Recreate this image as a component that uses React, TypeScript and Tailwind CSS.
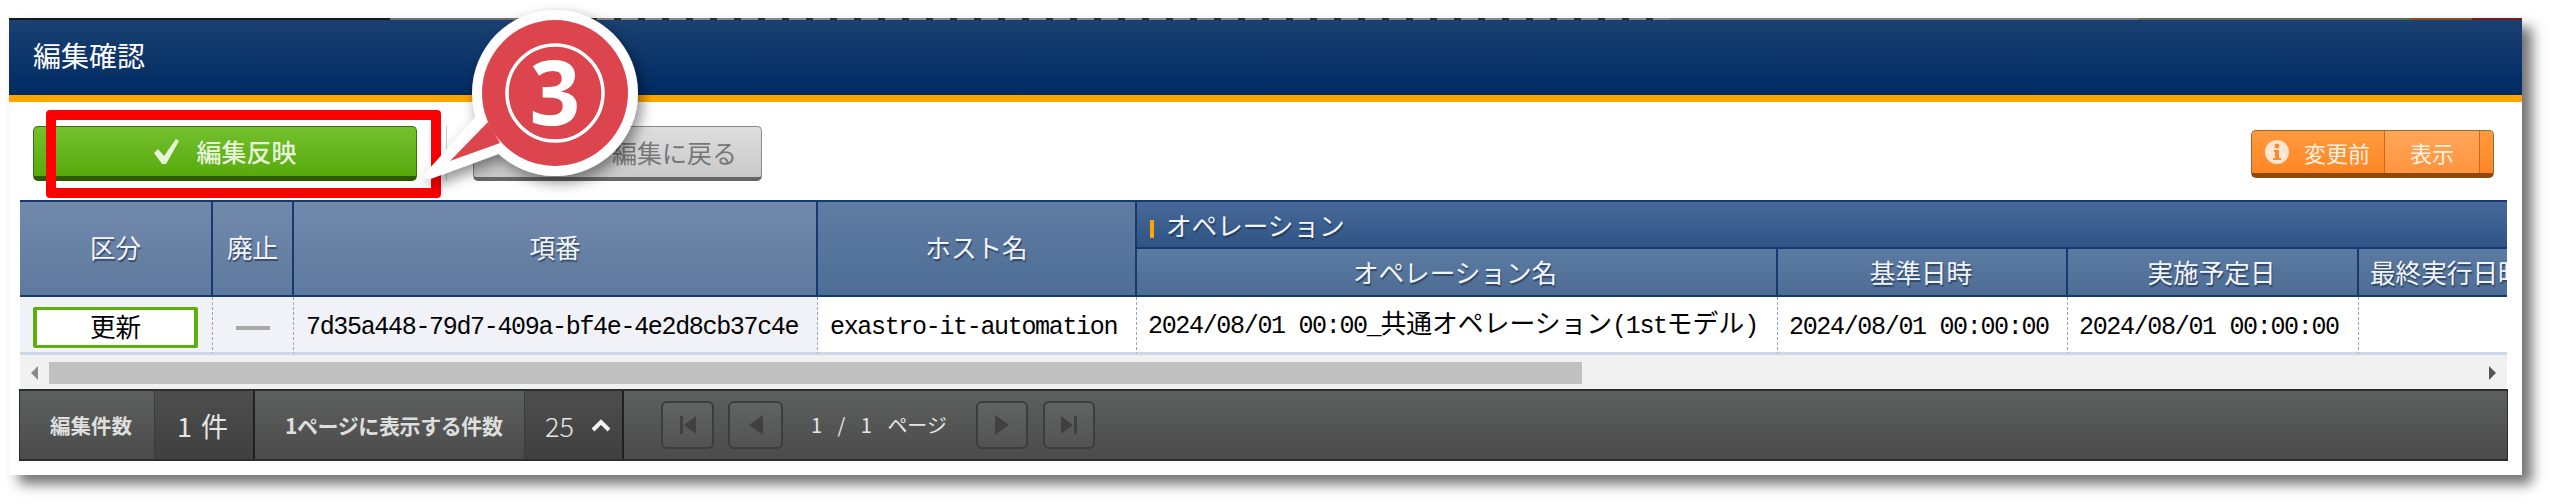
const sans = "font-['Noto_Sans_CJK_JP',sans-serif]";
const mono = "font-['Liberation_Mono','Noto_Sans_CJK_JP',monospace] text-[25px] tracking-[-1.33px] text-black";
const thShadow = '[text-shadow:1px_2px_1px_rgba(20,40,70,0.6)]';

const PagerIcon = ({ kind }: { kind: 'first' | 'prev' | 'next' | 'last' }) => (
    <svg width="24" height="24" viewBox="0 0 24 24" fill="#3f403f">
        {kind === 'first' && <path d="M4 3h3v18H4zM20 3v18L8 12z" />}
        {kind === 'prev' && <path d="M19 2v20L5 12z" />}
        {kind === 'next' && <path d="M5 2v20l14-10z" />}
        {kind === 'last' && <path d="M17 3h3v18h-3zM4 3v18l12-9z" />}
    </svg>
);

function PagerButton({ kind, width }: { kind: 'first' | 'prev' | 'next' | 'last'; width: string }) {
    return (
        <div className={`${width} h-[48px] flex items-center justify-center rounded-[6px] border-2 border-[#3c3d3c] bg-gradient-to-b from-[#626463] to-[#525352]`}>
            <PagerIcon kind={kind} />
        </div>
    );
}

function Callout() {
    return (
        <svg className="absolute inset-0 pointer-events-none" width="2551" height="504" viewBox="0 0 2551 504">
            <defs>
                <filter id="bubbleShadow" x="-20%" y="-20%" width="150%" height="150%">
                    <feDropShadow dx="4" dy="6" stdDeviation="7" floodColor="#000" floodOpacity="0.45" />
                </filter>
            </defs>
            <g filter="url(#bubbleShadow)">
                <circle cx="555" cy="93" r="83" fill="#fff" />
                <path d="M477 117L426 174Q424 178 430 178L498 153Z" fill="#fff" stroke="#fff" strokeWidth="2" strokeLinejoin="round" />
            </g>
            <circle cx="555" cy="93" r="73" fill="#dc444e" />
            <path d="M488 122L450 161L500 143Z" fill="#dc444e" />
            <circle cx="555" cy="93" r="48" fill="none" stroke="#fff" strokeWidth="3.5" />
            <text x="555" y="125" textAnchor="middle" fontFamily="'Noto Sans', sans-serif" fontWeight="700" fontSize="89" fill="#fff">3</text>
        </svg>
    );
}

export default function App() {
    return (
        <div className={`relative w-[2551px] h-[504px] overflow-hidden bg-white pl-[9px] pt-[18px] ${sans}`}>
            <div className="flex flex-col w-[2513px] h-[457px] bg-white shadow-[10px_9px_12px_rgba(0,0,0,0.55)]">
                {/* Sliver of the page that sits above the title bar */}
                <div className="flex h-[2px]">
                    <div className="w-[381px] bg-[#14181c]" />
                    <div className="w-[200px] bg-[#6e7072]" />
                    <div className="w-[1080px] bg-[repeating-linear-gradient(90deg,#2a2c2e_0px,#2a2c2e_7px,#86888a_7px,#86888a_24px)]" />
                    <div className="w-[468px] bg-[#77797a]" />
                    <div className="w-[272px] bg-[#5b6b55]" />
                    <div className="w-[62px] bg-[#8a4e1c]" />
                    <div className="w-[50px] bg-[#7a1c1c]" />
                </div>

                {/* Title bar */}
                <div className="flex items-center h-[82px] pl-[24px] pb-[6px] border-b-[7px] border-b-[#ffa500] bg-gradient-to-b from-[#1b4172] to-[#002a63]">
                    <span className="text-[28px] leading-none text-white">編集確認</span>
                </div>

                {/* Buttons */}
                <div className="flex items-center h-[98px] pl-[24px] pr-[28px] pt-[5px]">
                    <div className="flex items-center justify-center gap-[16px] w-[384px] h-[55px] rounded-[5px] border border-[#3d6b12] border-b-[5px] border-b-[#2c5a00] bg-gradient-to-b from-[#74c02e] to-[#57aa08]">
                        <svg width="27" height="27" viewBox="0 0 27 27" fill="#e6f4d8">
                            <path d="M1 15l4-4 6 7L23 1l3 2-13 23h-4z" />
                        </svg>
                        <span className="text-[25px] leading-none font-medium text-[#e6f4d8]">編集反映</span>
                    </div>
                    <div className="w-px h-[55px] ml-[29px] mr-[26px] bg-[#c8c8c8]" />
                    <div className="flex items-center justify-end pr-[24px] w-[289px] h-[55px] rounded-[5px] border border-[#8a8a8a] border-b-[4px] border-b-[#666] bg-gradient-to-b from-[#dedede] to-[#c9c9c9]">
                        <span className="text-[25px] leading-none text-[#777]">編集に戻る</span>
                    </div>
                    <div className="flex ml-auto w-[243px] h-[48px] rounded-[5px] border border-[#a0652a] border-b-[5px] border-b-[#8a4a10] overflow-hidden text-[22px] leading-none text-[#fff1e2] bg-gradient-to-b from-[#ff9a3e] to-[#ff8624]">
                        <div className="flex items-center w-[133px] pl-[13px] gap-[15px] border-r border-[#c46a22]">
                            <svg width="24" height="24" viewBox="0 0 24 24">
                                <circle cx="12" cy="12" r="12" fill="#ffe6d0" />
                                <circle cx="12" cy="6" r="2.4" fill="#ff8a2c" />
                                <path d="M9 10h5v8h2v2H8v-2h2v-6H9z" fill="#ff8a2c" />
                            </svg>
                            <span>変更前</span>
                        </div>
                        <div className="flex items-center justify-center w-[95px] bg-gradient-to-b from-[#ffa657] to-[#ff9440] border-r border-[#c46a22]">
                            <span>表示</span>
                        </div>
                    </div>
                </div>

                {/* Table */}
                <div className="ml-[11px] w-[2487px] h-[155px] overflow-hidden">
                    <table className="table-fixed w-[2523px] border-separate border-spacing-0">
                        <colgroup>
                            <col className="w-[193px]" />
                            <col className="w-[81px]" />
                            <col className="w-[524px]" />
                            <col className="w-[319px]" />
                            <col className="w-[641px]" />
                            <col className="w-[290px]" />
                            <col className="w-[291px]" />
                            <col className="w-[184px]" />
                        </colgroup>
                        <thead className={`text-[25.6px] leading-none font-normal text-[#f2f5f9] ${thShadow}`}>
                            <tr className="h-[49px]">
                                <th rowSpan={2} className="font-normal pb-[3px] border-t-2 border-b-2 border-r-2 border-[#143a70] bg-gradient-to-b from-[#7189ab] to-[#5f7a9f]">区分</th>
                                <th rowSpan={2} className="font-normal pb-[3px] border-t-2 border-b-2 border-r-2 border-[#143a70] bg-gradient-to-b from-[#7189ab] to-[#5f7a9f]">廃止</th>
                                <th rowSpan={2} className="font-normal pb-[3px] border-t-2 border-b-2 border-r-2 border-[#143a70] bg-gradient-to-b from-[#7189ab] to-[#5f7a9f]">項番</th>
                                <th rowSpan={2} className="font-normal pb-[3px] border-t-2 border-b-2 border-r-2 border-[#143a70] bg-gradient-to-b from-[#5f7ca2] to-[#4e6e97]">ホスト名</th>
                                <th colSpan={4} className="font-normal text-left pl-[13px] border-t-2 border-b-2 border-[#143a70] bg-gradient-to-b from-[#476a9a] to-[#2f5485]">
                                    <span className="inline-block w-[4px] h-[18px] mr-[12px] align-[-2px] bg-[#ffa500]" />
                                    オペレーション
                                </th>
                            </tr>
                            <tr className="h-[48px]">
                                <th className="font-normal pr-[3px] border-b-2 border-r-2 border-[#143a70] bg-gradient-to-b from-[#5c7ba3] to-[#4e6d95]">オペレーション名</th>
                                <th className="font-normal pr-[2px] border-b-2 border-r-2 border-[#143a70] bg-gradient-to-b from-[#5c7ba3] to-[#4e6d95]">基準日時</th>
                                <th className="font-normal pr-[2px] border-b-2 border-r-2 border-[#143a70] bg-gradient-to-b from-[#5c7ba3] to-[#4e6d95]">実施予定日</th>
                                <th className="font-normal text-left pl-[11px] whitespace-nowrap border-b-2 border-[#143a70] bg-gradient-to-b from-[#5c7ba3] to-[#4e6d95]">最終実行日時</th>
                            </tr>
                        </thead>
                        <tbody>
                            <tr className="h-[58px]">
                                <td className="p-0 pl-[13px] border-b-[3px] border-b-[#cdd8e6] border-r border-r-[#8fa6c4] border-dashed [border-bottom-style:solid] bg-[#f0f2f7]">
                                    <div className="flex items-center justify-center w-[165px] h-[41px] mt-[6px] pb-[3px] rounded-[2px] border-[3px] border-l-[4px] border-r-[4px] border-[#5cb00a] bg-white text-[25.6px] leading-none text-black">更新</div>
                                </td>
                                <td className="p-0 border-b-[3px] border-b-[#cdd8e6] border-r border-r-[#8fa6c4] border-dashed [border-bottom-style:solid] bg-[#f0f2f7]">
                                    <div className="w-[34px] h-[4px] mx-auto mt-[7px] bg-[#a8a8a8]" />
                                </td>
                                <td className={`p-0 pl-[12px] pt-[6px] whitespace-nowrap border-b-[3px] border-b-[#cdd8e6] border-r border-r-[#8fa6c4] border-dashed [border-bottom-style:solid] bg-[#f0f2f7] ${mono}`}>7d35a448-79d7-409a-bf4e-4e2d8cb37c4e</td>
                                <td className={`p-0 pl-[12px] pt-[6px] whitespace-nowrap border-b-[3px] border-b-[#cdd8e6] border-r border-r-[#8fa6c4] border-dashed [border-bottom-style:solid] ${mono}`}>exastro-it-automation</td>
                                <td className={`p-0 pl-[11px] pt-[6px] whitespace-nowrap border-b-[3px] border-b-[#cdd8e6] border-r border-r-[#8fa6c4] border-dashed [border-bottom-style:solid] ${mono}`}>
                                    2024/08/01 00:00_<span className="text-[25.8px] tracking-normal">共通オペレーション</span>(1st<span className="text-[25.8px] tracking-normal">モデル</span>)
                                </td>
                                <td className={`p-0 pl-[11px] pt-[6px] whitespace-nowrap border-b-[3px] border-b-[#cdd8e6] border-r border-r-[#8fa6c4] border-dashed [border-bottom-style:solid] ${mono}`}>2024/08/01 00:00:00</td>
                                <td className={`p-0 pl-[11px] pt-[6px] whitespace-nowrap border-b-[3px] border-b-[#cdd8e6] border-r border-r-[#8fa6c4] border-dashed [border-bottom-style:solid] ${mono}`}>2024/08/01 00:00:00</td>
                                <td className="p-0 border-b-[3px] border-b-[#cdd8e6]" />
                            </tr>
                        </tbody>
                    </table>
                </div>

                {/* Scrollbar */}
                <div className="flex items-center ml-[11px] w-[2487px] h-[34px] pt-[2px] bg-[#f1f1f1]">
                    <svg className="ml-[10px] shrink-0" width="9" height="14" viewBox="0 0 9 14" fill="#8a8a8a"><path d="M8 0v14L1 7z" /></svg>
                    <div className="ml-[10px] w-[1533px] h-[22px] bg-[#c0c0c0]" />
                    <svg className="ml-auto mr-[10px] shrink-0" width="9" height="14" viewBox="0 0 9 14" fill="#555"><path d="M1 0v14l7-7z" /></svg>
                </div>

                {/* Footer pager */}
                <div className="flex items-stretch ml-[10px] w-[2489px] h-[72px] border border-t-2 border-b-2 border-[#2c2d2c] bg-gradient-to-b from-[#5e605f] to-[#4a4b4a] text-[#e6e6e6]">
                    <div className="flex items-center w-[134px] pl-[30px] text-[20.5px] leading-none font-bold text-[#dedede]">編集件数</div>
                    <div className="flex items-center w-[101px] pl-[22px] gap-[9px] border-l border-[#3a3b3a] border-r-2 border-r-[#1f201f] bg-gradient-to-b from-[#4c4d4c] to-[#3f403f] text-[27px] leading-none">
                        <span>1</span>
                        <span>件</span>
                    </div>
                    <div className="flex items-center w-[269px] pl-[30px] text-[21px] tracking-[-0.4px] leading-none font-bold text-[#dedede] whitespace-nowrap">1ページに表示する件数</div>
                    <div className="flex items-center w-[100px] pl-[20px] gap-[17px] border-l border-[#3a3b3a] border-r-2 border-r-[#1f201f] bg-gradient-to-b from-[#4c4d4c] to-[#3f403f]">
                        <span className="text-[27px] leading-none font-light">25</span>
                        <svg width="20" height="14" viewBox="0 0 20 14" fill="none" stroke="#f2f2f2" strokeWidth="4"><path d="M2 12l8-8 8 8" /></svg>
                    </div>
                    <div className="flex items-center pl-[37px]">
                        <PagerButton kind="first" width="w-[53px]" />
                        <div className="w-[14px]" />
                        <PagerButton kind="prev" width="w-[55px]" />
                        <div className="flex items-center justify-between w-[136px] ml-[28px] mr-[29px] text-[20px] leading-none whitespace-nowrap">
                            <span>1</span>
                            <span>/</span>
                            <span>1</span>
                            <span>ページ</span>
                        </div>
                        <PagerButton kind="next" width="w-[52px]" />
                        <div className="w-[15px]" />
                        <PagerButton kind="last" width="w-[52px]" />
                    </div>
                </div>
            </div>

            {/* Annotation overlays */}
            <div className="absolute left-[46px] top-[110px] w-[395px] h-[88px] rounded-[4px] border-[10px] border-[#ff0000]" />
            <Callout />
        </div>
    );
}
